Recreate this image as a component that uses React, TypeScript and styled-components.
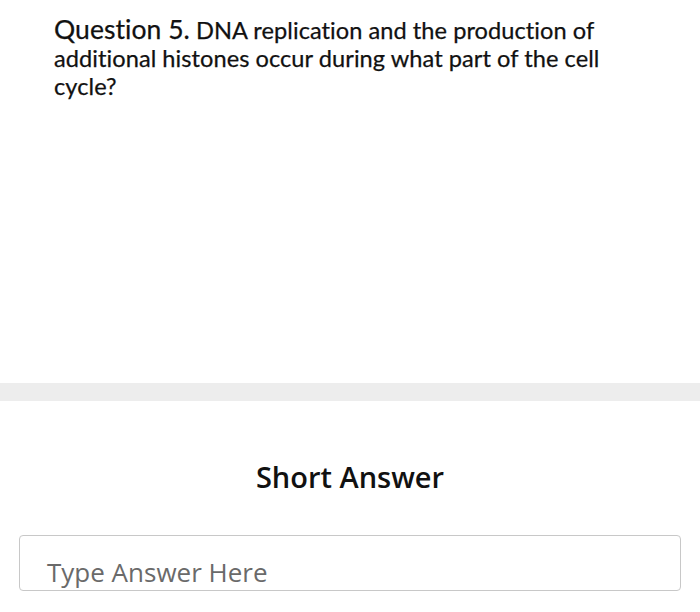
import React from 'react'
import styled, { createGlobalStyle } from 'styled-components'

const GlobalStyle = createGlobalStyle`
  html, body {
    margin: 0;
    padding: 0;
    background: #fff;
  }
`

const Page = styled.div`
  width: 700px;
  height: 612px;
  display: flex;
  flex-direction: column;
  background: #fff;
  overflow: hidden;
`

const QuestionBlock = styled.div`
  height: 383px;
  padding: 15px 80px 0 54px;
  box-sizing: border-box;
`

const QuestionText = styled.p`
  margin: 0;
  font-family: Lato, 'Liberation Sans', sans-serif;
  font-size: 23.6px;
  line-height: 28px;
  color: #111;
  letter-spacing: 0.05px;
  -webkit-text-stroke: 0.25px #111;
`

const QuestionLabel = styled.span`
  font-size: 26.5px;
`

const Divider = styled.div`
  height: 18px;
  background: #ededed;
`

const AnswerBlock = styled.div`
  display: flex;
  flex-direction: column;
  align-items: center;
  padding: 56px 19px 0 19px;
`

const AnswerTitle = styled.h2`
  margin: 0;
  font-family: 'Open Sans', sans-serif;
  font-weight: 600;
  font-size: 29px;
  color: #111;
`

const AnswerInput = styled.div`
  align-self: stretch;
  margin-top: 39px;
  height: 54px;
  border: 1px solid #c8c8c8;
  border-radius: 4px;
  display: flex;
  align-items: flex-end;
  padding: 0 26px 0 27px;
  font-family: 'Open Sans', sans-serif;
  font-size: 26px;
  line-height: 36px;
  color: #6a6a6a;
  overflow: hidden;
`

export default function App() {
  return (
    <Page>
      <GlobalStyle />
      <QuestionBlock>
        <QuestionText>
          <QuestionLabel>Question 5.</QuestionLabel> DNA replication and the production of
          additional histones occur during what part of the cell cycle?
        </QuestionText>
      </QuestionBlock>
      <Divider />
      <AnswerBlock>
        <AnswerTitle>Short Answer</AnswerTitle>
        <AnswerInput>Type Answer Here</AnswerInput>
      </AnswerBlock>
    </Page>
  )
}
